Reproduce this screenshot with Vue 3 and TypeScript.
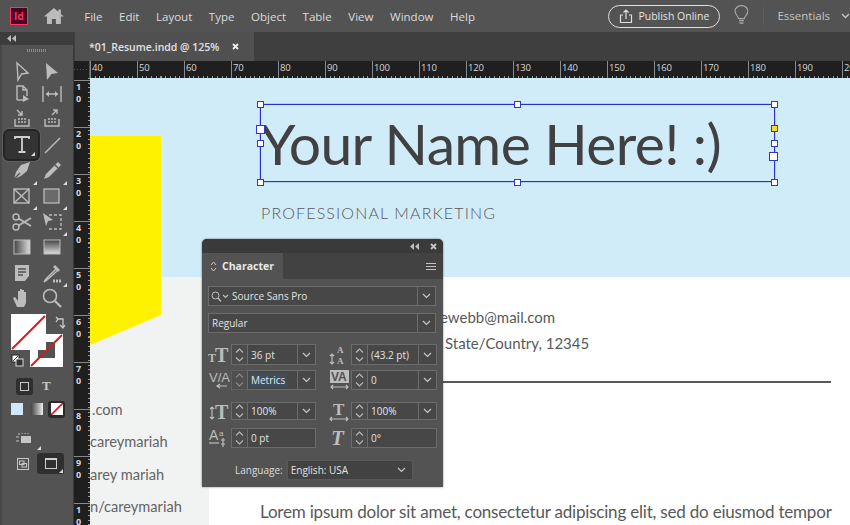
<script setup lang="ts">
const menus = ['File', 'Edit', 'Layout', 'Type', 'Object', 'Table', 'View', 'Window', 'Help']
const hTicks = [40, 50, 60, 70, 80, 90, 100, 110, 120, 130, 140, 150, 160, 170, 180, 190, 200]
const vTicks = ['10', '20', '30', '40', '50', '60', '70', '80', '90', '10']

const S = 'fill="none" stroke="#bcbcbc" stroke-width="1.4"'
const F = 'fill="#bcbcbc"'
const tools: { svg: string; active?: boolean; corner?: boolean }[] = [
  { svg: `<path d="M7 3 18 13 11.5 14 8 20Z" ${S}/>` },
  { svg: `<path d="M6 3 18 13 11.5 14 7 20Z" ${F}/>` },
  { svg: `<path d="M7 18V4h6l4 4v6M13 4v4h4" ${S}/><path d="M7 18h6" ${S}/><path d="M13 13l6 4-6 3Z" ${F}/>` },
  { svg: `<path d="M3 4v16M21 4v16M6 12h12" ${S}/><path d="M6 12l3-3v6ZM18 12l-3-3v6Z" ${F}/>` },
  { svg: `<path d="M5 13v7h14v-7" ${S}/><path d="M8 13h2M11 13h2M14 13h2M8 16h2M11 16h2M14 16h2" ${S}/><path d="M7 4l5 5M12 5v4H8" ${S}/>` },
  { svg: `<path d="M5 13v7h14v-7" ${S}/><path d="M8 13h2M11 13h2M14 13h2M8 16h2M11 16h2M14 16h2" ${S}/><path d="M12 9l5-5M13 4h4v4" ${S}/>` },
  { active: true, corner: true, svg: `<path d="M5 6V4h14v2M12 4v15M8.5 19h7" fill="none" stroke="#d0d0d0" stroke-width="1.8"/>` },
  { svg: `<path d="M5 20 20 5" ${S}/>` },
  { corner: true, svg: `<path d="M20 3l-9 3-5 7-2 7 7-3 6-5Z" ${F}/><path d="M4 20l6-6" stroke="#535353" stroke-width="1.2"/>` },
  { corner: true, svg: `<path d="M18 3l3 3L9 18l-5 2 2-5Z" ${F}/><path d="M15 6l3 3" stroke="#535353" stroke-width="1.2"/>` },
  { corner: true, svg: `<rect x="4" y="5" width="15" height="14" ${S}/><path d="M4 5l15 14M19 5 4 19" ${S}/>` },
  { corner: true, svg: `<rect x="4" y="5" width="15" height="14" fill="#6a6a6a" stroke="#b4b4b4" stroke-width="1.4"/>` },
  { svg: `<circle cx="6" cy="7" r="3" ${S}/><circle cx="6" cy="17" r="3" ${S}/><path d="M8.5 8.5 21 16M8.5 15.5 21 8" fill="none" stroke="#bcbcbc" stroke-width="1.8"/>` },
  { corner: true, svg: `<path d="M3 3l10 7-5 1-2 5Z" ${F}/><path d="M9 5h12v14H7" fill="none" stroke="#bcbcbc" stroke-width="1.4" stroke-dasharray="3 2"/>` },
  { svg: `<defs><linearGradient id="g1"><stop offset="0" stop-color="#444"/><stop offset="1" stop-color="#ddd"/></linearGradient></defs><rect x="4" y="5" width="16" height="14" fill="url(#g1)" stroke="#bcbcbc"/>` },
  { svg: `<defs><linearGradient id="g2" x2="0" y2="1"><stop offset="0" stop-color="#444"/><stop offset="1" stop-color="#ddd"/></linearGradient></defs><rect x="4" y="5" width="16" height="14" fill="url(#g2)" stroke="#bcbcbc"/>` },
  { svg: `<path d="M5 4h14v11l-4 5H5Z" ${F}/><path d="M8 8h8M8 11h8M8 14h5" stroke="#535353" stroke-width="1.3"/>` },
  { corner: true, svg: `<path d="M16 8 6 18l-2 3 3-2 10-9" ${S}/><path d="M15 4l5 5-2 2-5-5Z" ${F}/><path d="M13 20h9" stroke="#bcbcbc" stroke-width="3" stroke-dasharray="2 1"/>` },
  { svg: `<path d="M7 21 3 12l2-1 3 4V5h2v7-9h2v9-8h2v8-6h2v11l-2 4Z" ${F}/>` },
  { svg: `<circle cx="10" cy="10" r="6.5" fill="none" stroke="#bcbcbc" stroke-width="1.6"/><path d="M15 15l6 6" stroke="#bcbcbc" stroke-width="2.2"/>` },
]

interface Cell { icon: string; value: string; drop: boolean; hl?: boolean; dim?: boolean }
const T = 'class="gl"'
const Ar = 'stroke="#bdbdbd" fill="none" stroke-width="1.2"'
const cells: Cell[] = [
  { icon: `<text ${T} x="0" y="18" font-size="12">T</text><text ${T} x="7" y="18" font-size="20">T</text>`, value: '36 pt', drop: true },
  { icon: `<text ${T} x="9" y="9" font-size="9">A</text><text ${T} x="9" y="20" font-size="9">A</text><path d="M4 10v10M2 12l2-2 2 2M2 18l2 2 2-2" ${Ar}/>`, value: '(43.2 pt)', drop: true },
  { icon: `<text class="gl sans" x="1" y="13" font-size="13">V/A</text><path d="M9 17h10M12 15l-3 2 3 2" ${Ar}/>`, value: 'Metrics', drop: true, hl: true, dim: true },
  { icon: `<rect x="2" y="1" width="19" height="13" fill="#bdbdbd"/><text class="gl sans dk" x="3" y="12" font-size="12">VA</text><path d="M3 18h17M5 16l-2 2 2 2M18 16l2 2-2 2" ${Ar}/>`, value: '0', drop: true },
  { icon: `<text ${T} x="7" y="19" font-size="20">T</text><path d="M4 7v12M2 9l2-2 2 2M2 17l2 2 2-2" ${Ar}/>`, value: '100%', drop: true, hl: true },
  { icon: `<text ${T} x="5" y="15" font-size="17">T</text><path d="M2 19h18M4 17l-2 2 2 2M18 17l2 2-2 2" ${Ar}/>`, value: '100%', drop: true, hl: true },
  { icon: `<text class="gl sans" x="1" y="13" font-size="14">A</text><text class="gl sans" x="11" y="9" font-size="8">a</text><path d="M1 16h10" ${Ar}/><path d="M15 11v9M13 13h4M13 17h4" ${Ar}/>`, value: '0 pt', drop: false },
  { icon: `<text class="gl it" x="3" y="18" font-size="21">T</text>`, value: '0°', drop: false },
]
</script>

<template>
  <div class="app">
    <header class="menubar">
      <div class="logo">Id</div>
      <svg class="home" width="20" height="16" viewBox="0 0 20 16">
        <path d="M10 0 0 8.5h3V16h5v-5h4v5h5V8.5h3l-3-2.6V1.5h-2.5v2.2Z" fill="#bcbcbc" />
      </svg>
      <nav class="menus">
        <span v-for="m in menus" :key="m">{{ m }}</span>
      </nav>
      <div class="publish">
        <svg width="14" height="15" viewBox="0 0 14 15">
          <path d="M4 6H1.5v7.5h11V6H10M7 10V1M4.5 3.5 7 1l2.500 2.500" fill="none" stroke="#dedede" stroke-width="1.200" />
        </svg>
        <span>Publish Online</span>
      </div>
      <svg class="bulb" width="15" height="20" viewBox="0 0 15 20">
        <path d="M4.500 13.500C4 10.500 1 9.500 1 6a6.500 5.500 0 0 1 13 0c0 3.500-3 4.500-3.500 7.500Z" fill="none" stroke="#a8a8a8" stroke-width="1.200" />
        <path d="M5 15.500h5M5.500 18h4" stroke="#a8a8a8" stroke-width="1.600" />
      </svg>
      <div class="sep"></div>
      <div class="essentials">Essentials</div>
      <svg class="chev" width="9" height="6" viewBox="0 0 9 6"><path d="M1 1l3.500 3.500L8 1" fill="none" stroke="#c8c8c8" stroke-width="1.300" /></svg>
    </header>

    <div class="main">
      <aside class="tools">
        <div class="tools-head">
          <svg width="9" height="7" viewBox="0 0 9 7"><path d="M4 0v7L0 3.500ZM9 0v7L5 3.500Z" fill="#bdbdbd" /></svg>
        </div>
        <div class="grip"></div>
        <div class="tool-grid">
          <div v-for="(t, i) in tools" :key="i" class="tool" :class="{ active: t.active, corner: t.corner }">
            <svg width="24" height="24" viewBox="0 0 24 24" v-html="t.svg"></svg>
          </div>
        </div>
        <svg class="swatches" width="72" height="66" viewBox="0 0 72 66">
          <rect x="30" y="25" width="33" height="33" fill="#fff" />
          <rect x="38" y="33" width="17" height="16" fill="#535353" />
          <path d="M31 57 62 26" stroke="#e0161e" stroke-width="2" />
          <rect x="11" y="5" width="35" height="36" fill="#fff" />
          <path d="M12 40 45 7" stroke="#e0161e" stroke-width="2" />
          <rect x="12" y="46" width="7" height="7" fill="#fff" stroke="#222" />
          <rect x="16" y="50" width="7" height="7" fill="#333" stroke="#ddd" />
          <path d="M13 52l5-5" stroke="#e0161e" />
          <path d="M57 10h6v8M56 13l2-3-2-2M60 16l3 3 2-3" fill="none" stroke="#c8c8c8" stroke-width="1.300" />
        </svg>
        <div class="fmt-row">
          <div class="fmt-box"><i></i></div>
          <span class="fmt-t">T</span>
        </div>
        <div class="apply-row">
          <i class="ap blue"></i>
          <i class="ap grad"></i>
          <div class="ap-box">
            <svg width="12" height="12" viewBox="0 0 12 12"><rect width="12" height="12" fill="#fff" /><path d="M0 12 12 0" stroke="#e0161e" stroke-width="1.600" /></svg>
          </div>
        </div>
        <div class="more corner">
          <svg width="16" height="12" viewBox="0 0 16 12">
            <path d="M0 5h3M0 9h3M2 2h2M6 1v1M9 1v1M12 1v1" stroke="#c6c6c6" />
            <rect x="5" y="4" width="10" height="7" fill="#c6c6c6" />
          </svg>
        </div>
        <div class="view-row">
          <svg width="12" height="12" viewBox="0 0 12 12">
            <rect x=".5" y=".5" width="11" height="11" fill="none" stroke="#c6c6c6" />
            <rect x="2.500" y="3" width="4.500" height="3.500" fill="none" stroke="#c6c6c6" />
            <rect x="5" y="5.500" width="4.500" height="3.500" fill="none" stroke="#c6c6c6" />
          </svg>
          <div class="view-box corner"><i></i></div>
        </div>
      </aside>

      <div class="work">
        <div class="tabbar">
          <div class="tab">
            <span>*01_Resume.indd @ 125%</span>
            <svg width="7" height="7" viewBox="0 0 7 7"><path d="M1 1l5 5M6 1 1 6" stroke="#eee" stroke-width="1.800" /></svg>
          </div>
        </div>
        <div class="hruler-row">
          <div class="corner-box"></div>
          <div class="hruler">
            <span v-for="n in hTicks" :key="n" class="htick">{{ n }}</span>
          </div>
        </div>
        <div class="body">
          <div class="vruler">
            <div v-for="(n, k) in vTicks" :key="k" class="vtick">
              <span v-for="(d, i) in n" :key="i">{{ d }}</span>
            </div>
          </div>
          <div class="canvas">
            <div class="band"></div>
            <div class="side"></div>
            <svg class="flag" width="72" height="210" viewBox="0 0 72 210"><path d="M0 0H71V179L0 209Z" fill="#fff200" /></svg>

            <h1 class="name">Your Name Here! :)</h1>
            <p class="role">PROFESSIONAL MARKETING</p>
            <div class="frame"></div>
            <i class="h" style="left:167px;top:23px"></i>
            <i class="h" style="left:424px;top:23px"></i>
            <i class="h" style="left:681px;top:23px"></i>
            <i class="h" style="left:167px;top:101px"></i>
            <i class="h" style="left:424px;top:101px"></i>
            <i class="h" style="left:681px;top:101px"></i>
            <i class="h big" style="left:166px;top:47px"></i>
            <i class="h" style="left:167px;top:62px"></i>
            <i class="h yel" style="left:681px;top:47px"></i>
            <i class="h" style="left:681px;top:62px"></i>
            <i class="h big" style="left:679px;top:74px"></i>

            <p class="doc mail">ewebb@mail.com</p>
            <p class="doc addr">State/Country, 12345</p>
            <div class="rule"></div>
            <p class="doc lorem">Lorem ipsum dolor sit amet, consectetur adipiscing elit, sed do eiusmod tempor</p>
            <p class="doc left l1">.com</p>
            <p class="doc left l2">careymariah</p>
            <p class="doc left l3">arey mariah</p>
            <p class="doc left l4">n/careymariah</p>

            <section class="panel">
              <div class="panel-top">
                <svg width="9" height="7" viewBox="0 0 9 7"><path d="M4 0v7L0 3.500ZM9 0v7L5 3.500Z" fill="#bdbdbd" /></svg>
                <svg width="7" height="7" viewBox="0 0 7 7"><path d="M1 1l5 5M6 1 1 6" stroke="#c4c4c4" stroke-width="1.800" /></svg>
              </div>
              <div class="panel-tabs">
                <div class="ptab">
                  <svg width="7" height="11" viewBox="0 0 7 11"><path d="M1 4l2.500-3L6 4M1 7l2.500 3L6 7" fill="none" stroke="#c8c8c8" /></svg>
                  <span>Character</span>
                </div>
                <div class="burger"><i></i><i></i><i></i></div>
              </div>
              <div class="panel-body">
                <div class="field wide">
                  <svg class="srch" width="19" height="11" viewBox="0 0 19 11">
                    <circle cx="4.500" cy="4.500" r="3.500" fill="none" stroke="#c0c0c0" />
                    <path d="M7 7l3 3.500M12 4l2.500 2.500L17 4" fill="none" stroke="#c0c0c0" stroke-width="1.200" />
                  </svg>
                  <span class="val">Source Sans Pro</span>
                  <span class="drop"><svg width="9" height="6" viewBox="0 0 9 6"><path d="M1 1l3.500 3.500L8 1" fill="none" stroke="#c8c8c8" stroke-width="1.200" /></svg></span>
                </div>
                <div class="field wide style">
                  <span class="val">Regular</span>
                  <span class="drop"><svg width="9" height="6" viewBox="0 0 9 6"><path d="M1 1l3.500 3.500L8 1" fill="none" stroke="#c8c8c8" stroke-width="1.200" /></svg></span>
                </div>
                <div class="cells">
                  <div v-for="(c, i) in cells" :key="i" class="cell" :class="'r' + i">
                    <svg class="ci" width="22" height="22" viewBox="0 0 22 22" v-html="c.icon"></svg>
                    <div class="spin" :class="{ dim: c.dim }">
                      <svg width="9" height="14" viewBox="0 0 9 14"><path d="M1 4.500 4.500 1 8 4.500M1 9.500 4.500 13 8 9.500" fill="none" stroke="#b8b8b8" stroke-width="1.100" /></svg>
                    </div>
                    <div class="field num">
                      <span class="val" :class="{ hl: c.hl }">{{ c.value }}</span>
                      <span v-if="c.drop" class="drop"><svg width="9" height="6" viewBox="0 0 9 6"><path d="M1 1l3.500 3.500L8 1" fill="none" stroke="#c8c8c8" stroke-width="1.200" /></svg></span>
                    </div>
                  </div>
                </div>
                <div class="lang">
                  <span>Language:</span>
                  <div class="langbox">
                    <span>English: USA</span>
                    <svg width="9" height="6" viewBox="0 0 9 6"><path d="M1 1l3.500 3.500L8 1" fill="none" stroke="#c8c8c8" stroke-width="1.200" /></svg>
                  </div>
                </div>
              </div>
            </section>
          </div>
        </div>
      </div>
    </div>
  </div>
</template>

<style>
html, body { margin: 0; background: #fff; overflow: hidden; }
</style>

<style scoped>
.app { width: 850px; height: 525px; display: flex; flex-direction: column; overflow: hidden; font-family: "Open Sans", "Noto Sans", sans-serif; color: #d8d8d8; }
.menubar { height: 32px; flex: none; background: #535353; display: flex; align-items: center; box-sizing: border-box; padding-left: 10px; }
.logo { width: 16px; height: 16px; background: #49021f; border: 1px solid #ff3366; color: #ff3366; font: 700 10px/16px "Open Sans", sans-serif; text-align: center; }
.home { margin-left: 16px; }
.menus { margin-left: 20.5px; display: flex; gap: 16.6px; width: 398.5px; font-size: 11.5px; color: #dcdcdc; }
.publish { margin-left: 129px; width: 112px; height: 23px; box-sizing: border-box; border: 1px solid #e0e0e0; border-radius: 12px; display: flex; align-items: center; gap: 5px; padding-left: 10px; font-size: 10.5px; color: #e4e4e4; white-space: nowrap; }
.bulb { margin-left: 14px; margin-top: -3px; }
.sep { margin-left: 15px; width: 1px; height: 18px; background: #5f5f5f; }
.essentials { margin-left: 13px; font-size: 11.5px; color: #c4c4c4; margin-top: -2px; }
.chev { margin-left: 11px; }

.main { flex: 1; display: flex; min-height: 0; }
.tools { width: 74px; flex: none; background: #535353; box-sizing: border-box; border-left: 2px solid #484848; border-right: 1px solid #3a3a3a; position: relative; }
.tools-head { height: 13px; margin-left: -2px; background: #3d3d3d; display: flex; align-items: center; padding-left: 7px; }
.grip { height: 3px; width: 20px; margin: 4px 0 0 25px; background: repeating-linear-gradient(90deg, #8a8a8a 0 1px, transparent 1px 2px); }
.tool-grid { margin: 8px 0 0 -2px; display: grid; grid-template-columns: 37px 24px; grid-template-rows: 23px 22px 26px 28px 24px 25px 27px 23px 29px 21px; justify-items: center; align-items: center; padding-left: 3px; }
.tool { position: relative; width: 24px; height: 24px; }
.tool svg { display: block; }
.tool.corner::after, .more.corner::after, .view-box.corner::after { content: ""; position: absolute; right: -3px; bottom: -2px; border: 2px solid transparent; border-right-color: #ddd; border-bottom-color: #ddd; }
.tool.active { width: 33px; height: 28px; background: #333; border-radius: 4px; box-shadow: 0 0 0 2px #242424, 0 0 0 3px #5f5f5f; display: flex; align-items: center; justify-content: center; }
.tool.active::after { right: 3px; bottom: 3px; }
.swatches { display: block; margin: 1px 0 0 -2px; }
.fmt-row { display: flex; align-items: center; margin: 2px 0 0 14px; height: 18px; gap: 9px; }
.fmt-box { width: 17px; height: 17px; background: #2f2f2f; border-radius: 3px; display: flex; align-items: center; justify-content: center; }
.fmt-box i { width: 7px; height: 7px; border: 1px solid #c8c8c8; }
.fmt-t { font: 700 13px "Liberation Serif", serif; color: #c8c8c8; }
.apply-row { display: flex; align-items: center; margin: 5px 0 0 9px; gap: 8px; height: 18px; }
.ap { width: 12px; height: 12px; display: block; }
.blue { background: #cfe8fb; }
.grad { background: linear-gradient(90deg, #444, #eee); }
.ap-box { width: 17px; height: 17px; background: #2b2b2b; border-radius: 3px; display: flex; align-items: center; justify-content: center; margin-left: -3px; }
.ap-box svg { display: block; }
.more { position: relative; width: 16px; height: 12px; margin: 14px 0 0 14px; }
.more svg { display: block; }
.more.corner::after { right: -9px; bottom: -6px; }
.view-row { display: flex; align-items: center; margin: 9px 0 0 15px; gap: 8px; }
.view-box { position: relative; width: 27px; height: 21px; background: #2f2f2f; border-radius: 3px; display: flex; align-items: center; justify-content: center; }
.view-box i { width: 10px; height: 8px; border: 1px solid #d0d0d0; border-top-width: 2px; }
.view-box.corner::after { right: 1px; bottom: 1px; }

.work { flex: 1; min-width: 0; display: flex; flex-direction: column; }
.tabbar { height: 29px; flex: none; background: #3f3f3f; display: flex; align-items: flex-end; padding-left: 1px; }
.tab { width: 179px; height: 29px; box-sizing: border-box; background: #505050; display: flex; align-items: center; padding-left: 14px; gap: 13px; font-size: 10.5px; font-weight: 600; color: #e2e2e2; white-space: nowrap; }
.hruler-row { height: 17px; flex: none; display: flex; background: #1f1f1f; }
.corner-box { width: 16px; flex: none; box-sizing: border-box; border-right: 1px solid #555; background: repeating-linear-gradient(90deg, #555 0 1px, transparent 1px 3px) 0 8px / 100% 1px no-repeat; }
.hruler { flex: 1; display: flex; overflow: hidden; background: repeating-linear-gradient(90deg, #9a9a9a 0 1px, transparent 1px 4.7px) bottom left / 100% 2px no-repeat #1f1f1f; }
.htick { width: 47px; flex: none; box-sizing: border-box; border-left: 1px solid #8a8a8a; padding-left: 1px; font-size: 9.5px; line-height: 14px; color: #d8d8d8; letter-spacing: -.2px; }
.body { flex: 1; display: flex; min-height: 0; }
.vruler { width: 16px; flex: none; box-sizing: border-box; padding-top: 2px; overflow: hidden; background: repeating-linear-gradient(180deg, #9a9a9a 0 1px, transparent 1px 4.7px) top right / 2px 100% no-repeat #1f1f1f; }
.vtick { height: 47px; flex: none; box-sizing: border-box; border-top: 1px solid #8a8a8a; padding: 0 0 0 2px; display: flex; flex-direction: column; font-size: 9px; line-height: 12px; font-weight: 700; color: #d8d8d8; }

.canvas { flex: 1; position: relative; overflow: hidden; background: #fff; }
.band { position: absolute; left: 0; top: 0; right: 0; height: 199px; background: #d1ecf9; }
.side { position: absolute; left: 0; top: 199px; width: 119px; bottom: 0; background: #f1f2f2; }
.flag { position: absolute; left: 0; top: 58px; }
.name { position: absolute; left: 170px; top: 24px; margin: 0; font: 400 57px/82px Lato, sans-serif; letter-spacing: -.6px; color: #414042; white-space: nowrap; }
.role { position: absolute; left: 171px; top: 125px; margin: 0; font: 300 16px/20px Lato, sans-serif; letter-spacing: 1.15px; color: #58595b; white-space: nowrap; }
.frame { position: absolute; left: 170px; top: 26px; width: 515px; height: 78px; box-sizing: border-box; border: 1px solid #2f2fd0; box-shadow: 0 0 1px #3535c8; }
.h { position: absolute; width: 7px; height: 7px; box-sizing: border-box; background: #fff; border: 1.5px solid #3535c8; }
.big { width: 9px; height: 9px; }
.yel { background: #f7dc30; }
.doc { position: absolute; margin: 0; font: 400 15px/20px Lato, sans-serif; color: #58595b; white-space: nowrap; }
.mail { left: 350px; top: 229px; }
.addr { left: 355px; top: 255px; }
.rule { position: absolute; left: 340px; top: 303px; width: 401px; height: 2px; background: #58595b; }
.lorem { left: 170px; top: 424px; font-size: 17px; letter-spacing: -.2px; }
.left { font-size: 14.6px; color: #636466; }
.l1 { left: 2px; top: 322px; }
.l2 { left: 0; top: 354px; }
.l3 { left: 0; top: 387px; }
.l4 { left: 0; top: 419px; }

.panel { position: absolute; left: 112px; top: 161px; width: 241px; height: 248px; background: #535353; border-radius: 5px 5px 0 0; box-shadow: 0 0 2px rgba(0, 0, 0, .6); display: flex; flex-direction: column; overflow: hidden; font-size: 10px; color: #dcdcdc; }
.panel-top { height: 14px; flex: none; background: #3a3a3a; display: flex; justify-content: flex-end; align-items: center; gap: 11px; padding-right: 6px; }
.panel-tabs { height: 26px; flex: none; background: #424242; display: flex; justify-content: space-between; align-items: center; }
.ptab { width: 81px; height: 26px; background: #535353; display: flex; align-items: center; gap: 5px; padding-left: 8px; box-sizing: border-box; font-weight: 700; font-size: 10.5px; color: #e8e8e8; }
.burger { width: 10px; margin-right: 7px; display: flex; flex-direction: column; gap: 2px; }
.burger i { height: 1px; background: #c4c4c4; display: block; }
.panel-body { padding: 7px 6px 0 6px; }
.field { display: flex; align-items: center; box-sizing: border-box; border: 1px solid #6c6c6c; background: #474747; height: 20px; color: #e2e2e2; }
.wide { width: 228px; }
.style { margin-top: 7px; }
.srch { margin-left: 2px; flex: none; }
.val { flex: 1; padding-left: 3px; white-space: nowrap; }
.wide .val { padding-left: 2px; }
.style .val { padding-left: 3px; }
.drop { width: 17px; height: 100%; flex: none; display: flex; align-items: center; justify-content: center; border-left: 1px solid #6c6c6c; }
.cells { display: grid; grid-template-columns: 120px 109px; grid-template-rows: 21px 5px 20px 12px 18px 8px 20px; margin-top: 11px; }
.cell { display: flex; align-items: center; min-height: 0; }
.r2, .r3 { grid-row: 3; }
.r4, .r5 { grid-row: 5; }
.r6, .r7 { grid-row: 7; }
.ci { flex: none; width: 22px; height: 22px; margin-right: 1px; }
.spin { width: 16px; height: 100%; box-sizing: border-box; flex: none; border: 1px solid #6c6c6c; border-right: 0; display: flex; align-items: center; justify-content: center; background: #4c4c4c; }
.spin.dim { opacity: .55; }
.num { flex: none; width: 69px; height: 100%; }
.cell:nth-child(even) .num { width: 70px; }
.val.hl { color: #e0e8f0; }
.r2 .val { flex: none; margin-left: 2px; padding: 0 2px 0 1px; background: #3f4d5a; }
.r2 .drop { margin-left: auto; }
.lang { display: flex; align-items: center; margin: 12px 0 0 27px; gap: 4px; }
.langbox { width: 126px; height: 20px; background: #424242; border: 1px solid #585858; box-sizing: border-box; display: flex; align-items: center; justify-content: space-between; padding: 0 6px 0 3px; color: #e2e2e2; }
:deep(.gl) { font-family: "Liberation Serif", serif; font-weight: 700; fill: #bdbdbd; }
:deep(.sans) { font-family: "Liberation Sans", sans-serif; font-weight: 400; }
:deep(.it) { font-style: italic; }
:deep(.dk) { fill: #535353; font-weight: 700; }
</style>
